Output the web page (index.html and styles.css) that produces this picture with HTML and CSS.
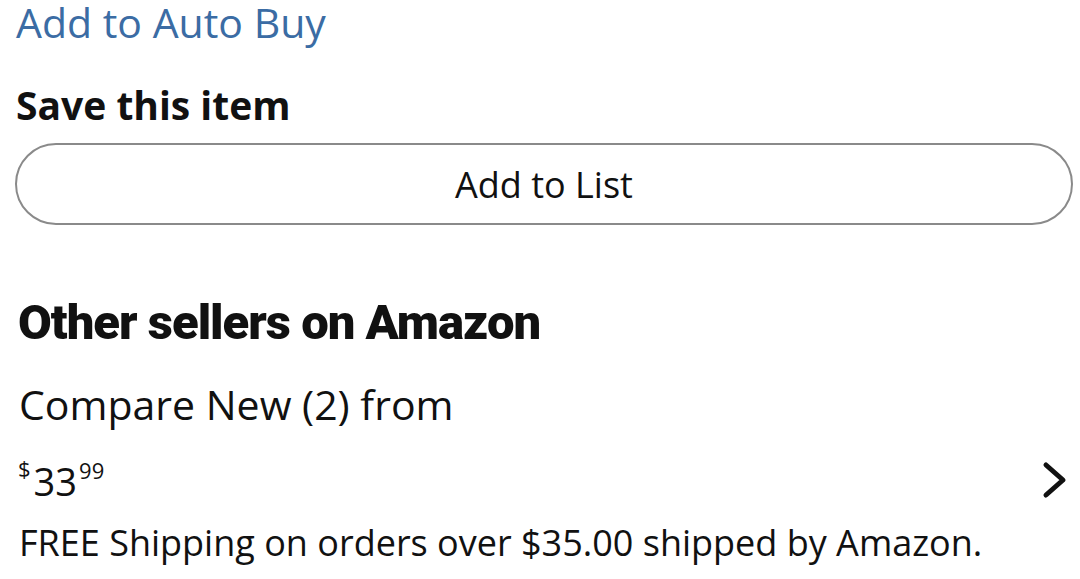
FILE: index.html
```html
<!DOCTYPE html>
<html>
<head>
<meta charset="utf-8">
<link rel="stylesheet" href="styles.css">
</head>
<body>
<div class="page">
  <a class="auto-buy">Add to Auto Buy</a>
  <h2 class="save-title">Save this item</h2>
  <button class="list-btn">Add to List</button>
  <h1 class="sellers-title">Other sellers on Amazon</h1>
  <div class="compare">Compare New (2) from</div>
  <div class="price-row">
    <div class="price"><span class="sym">$</span><span class="whole">33</span><span class="frac">99</span></div>
    <svg class="chev" width="26" height="38" viewBox="0 0 26 38"><path d="M4 4 L21 19 L4 34" fill="none" stroke="#111" stroke-width="5" stroke-linecap="round" stroke-linejoin="round"/></svg>
  </div>
  <div class="ship">FREE Shipping on orders over $35.00 shipped by Amazon.</div>
</div>
</body>
</html>
```
FILE: styles.css
```css
html, body { margin: 0; padding: 0; background: #fff; }
body { font-family: "Open Sans", "Noto Sans", sans-serif; color: #111; }
.page { display: flex; flex-direction: column; padding: 0 7px 0 16px; }
.auto-buy { color: #3b6ca4; font-size: 41px; line-height: 44px; }
.save-title { font-size: 39px; font-weight: 700; margin: 39px 0 0; line-height: 44px; }
.list-btn { font-family: inherit; font-size: 36px; color: #111; background: #fff; border: 2px solid #8a8a8a; border-radius: 42px; height: 82px; margin: 16px 0 0 -1px; padding: 0; }
.sellers-title { font-family: Roboto, sans-serif; font-weight: 900; font-size: 49px; letter-spacing: -1px; line-height: 56px; margin: 70px 0 0 2px; }
.compare { font-size: 41px; line-height: 48px; margin: 29px 0 0 3px; }
.price-row { display: flex; justify-content: space-between; align-items: center; margin-top: 30px; height: 44px; }
.price { display: flex; align-items: flex-start; margin-left: 2px; }
.sym { font-size: 22px; line-height: 26px; margin-top: -2px; }
.whole { font-size: 38px; line-height: 44px; margin: 2px 0 0 3px; }
.frac { font-size: 22px; line-height: 26px; margin-left: 2px; }
.chev { margin-right: 5px; }
.ship { font-size: 36px; line-height: 44px; margin: 19px 0 0 3px; }
```
